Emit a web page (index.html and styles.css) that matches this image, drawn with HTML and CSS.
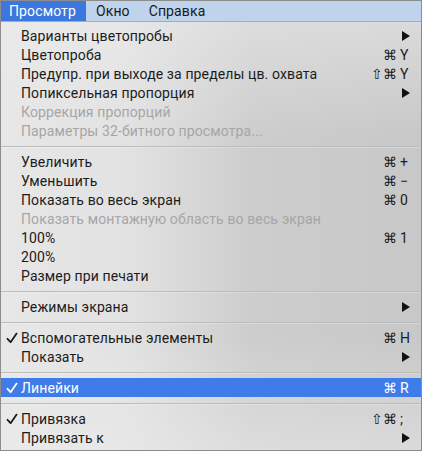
FILE: index.html
```html
<!DOCTYPE html>
<html lang="ru">
<head>
<meta charset="utf-8">
<link rel="stylesheet" href="styles.css">
</head>
<body>
<div class="frame">
  <div class="menubar">
    <span class="mb-item active">Просмотр</span>
    <span class="mb-item">Окно</span>
    <span class="mb-item">Справка</span>
  </div>
  <div class="menu">
    <div class="row"><span class="chk"></span><span class="label">Варианты цветопробы</span><span class="sub"><svg viewBox="0 0 8 10" width="8" height="10"><path d="M0 0 L8 5 L0 10 Z"/></svg></span></div>
    <div class="row"><span class="chk"></span><span class="label">Цветопроба</span><span class="sc"><span class="mods">⌘</span><span class="key">Y</span></span></div>
    <div class="row"><span class="chk"></span><span class="label">Предупр. при выходе за пределы цв. охвата</span><span class="sc"><span class="mods">⇧⌘</span><span class="key">Y</span></span></div>
    <div class="row"><span class="chk"></span><span class="label">Попиксельная пропорция</span><span class="sub"><svg viewBox="0 0 8 10" width="8" height="10"><path d="M0 0 L8 5 L0 10 Z"/></svg></span></div>
    <div class="row disabled"><span class="chk"></span><span class="label">Коррекция пропорций</span></div>
    <div class="row disabled"><span class="chk"></span><span class="label">Параметры 32-битного просмотра...</span></div>
    <div class="sep"></div>
    <div class="row"><span class="chk"></span><span class="label">Увеличить</span><span class="sc"><span class="mods">⌘</span><span class="key">+</span></span></div>
    <div class="row"><span class="chk"></span><span class="label">Уменьшить</span><span class="sc"><span class="mods">⌘</span><span class="key">−</span></span></div>
    <div class="row"><span class="chk"></span><span class="label">Показать во весь экран</span><span class="sc"><span class="mods">⌘</span><span class="key">0</span></span></div>
    <div class="row disabled"><span class="chk"></span><span class="label">Показать монтажную область во весь экран</span></div>
    <div class="row"><span class="chk"></span><span class="label">100%</span><span class="sc"><span class="mods">⌘</span><span class="key">1</span></span></div>
    <div class="row"><span class="chk"></span><span class="label">200%</span></div>
    <div class="row"><span class="chk"></span><span class="label">Размер при печати</span></div>
    <div class="sep"></div>
    <div class="row"><span class="chk"></span><span class="label">Режимы экрана</span><span class="sub"><svg viewBox="0 0 8 10" width="8" height="10"><path d="M0 0 L8 5 L0 10 Z"/></svg></span></div>
    <div class="sep"></div>
    <div class="row"><span class="chk"><svg viewBox="0 0 12 12" width="12" height="12"><path d="M1.5 6.8 L4.6 10.2 L10.6 1.6"/></svg></span><span class="label">Вспомогательные элементы</span><span class="sc"><span class="mods">⌘</span><span class="key">H</span></span></div>
    <div class="row"><span class="chk"></span><span class="label">Показать</span><span class="sub"><svg viewBox="0 0 8 10" width="8" height="10"><path d="M0 0 L8 5 L0 10 Z"/></svg></span></div>
    <div class="sep"></div>
    <div class="row selected"><span class="chk"><svg viewBox="0 0 12 12" width="12" height="12"><path d="M1.5 6.8 L4.6 10.2 L10.6 1.6"/></svg></span><span class="label">Линейки</span><span class="sc"><span class="mods">⌘</span><span class="key">R</span></span></div>
    <div class="sep"></div>
    <div class="row"><span class="chk"><svg viewBox="0 0 12 12" width="12" height="12"><path d="M1.5 6.8 L4.6 10.2 L10.6 1.6"/></svg></span><span class="label">Привязка</span><span class="sc"><span class="mods">⇧⌘</span><span class="key">;</span></span></div>
    <div class="row"><span class="chk"></span><span class="label">Привязать к</span><span class="sub"><svg viewBox="0 0 8 10" width="8" height="10"><path d="M0 0 L8 5 L0 10 Z"/></svg></span></div>
  </div>
</div>
</body>
</html>
```
FILE: styles.css
```css
* { box-sizing: border-box; }
html, body { margin: 0; padding: 0; }
body {
  font-family: Roboto, "Liberation Sans", Arial, sans-serif;
  font-size: 14px;
  letter-spacing: 0.12px;
  color: #1c1c1c;
}
.frame {
  width: 422px;
  height: 451px;
  border: 1px solid #8c8c8c;
  overflow: hidden;
  display: flex;
  flex-direction: column;
  background:
    linear-gradient(180deg, rgba(236,236,236,0.6) 0%, rgba(236,236,236,0) 30%, rgba(236,236,236,0) 75%, rgba(236,236,236,0.5) 100%),
    linear-gradient(90deg, #e7e7e7 0%, #e2e2e2 30%, #cdcdcd 60%, #c8c8c8 100%);
}
.menubar {
  height: 21px;
  flex: none;
  display: flex;
  align-items: stretch;
  background: #bfd3ed;
  border-bottom: 1px solid #a3adb9;
}
.mb-item {
  display: flex;
  align-items: center;
  padding: 0 9px 0 10px;
  color: #1a1a1a;
}
.mb-item.active {
  background: #3b77dd;
  color: #fff;
  padding: 0 10px 0 8px;
}
.menu {
  padding-top: 4px;
  display: flex;
  flex-direction: column;
}
.row {
  height: 19px;
  display: flex;
  align-items: center;
  padding-right: 10px;
}
.chk {
  width: 20px;
  flex: none;
  display: flex;
  align-items: center;
  padding-left: 5px;
}
.chk svg path {
  fill: none;
  stroke: #1c1c1c;
  stroke-width: 1.8;
  stroke-linecap: round;
  stroke-linejoin: round;
}
.label { flex: 1; white-space: nowrap; }
.disabled .label { color: #a6a6a6; }
.sc { display: flex; align-items: center; }
.mods { text-align: right; }
.key { width: 14px; padding-left: 3px; }
.sub { display: flex; align-items: center; padding-right: 1px; }
.sub svg path { fill: #111; }
.sep {
  height: 12px;
  display: flex;
  align-items: center;
}
.sep::before {
  content: "";
  display: block;
  width: 100%;
  height: 1px;
  background: #bcbcbc;
  box-shadow: 0 1px 0 rgba(255,255,255,0.25);
}
.selected {
  background: #3f7ce9;
  color: #fff;
}
.selected .chk svg path { stroke: #fff; }
```
